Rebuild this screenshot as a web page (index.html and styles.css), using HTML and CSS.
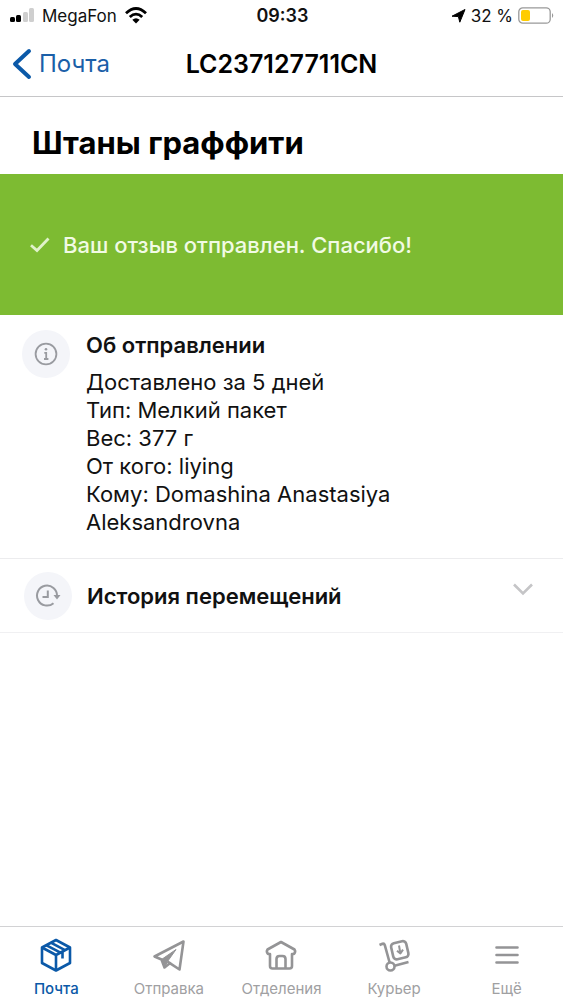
FILE: index.html
```html
<!DOCTYPE html>
<html lang="ru">
<head>
<meta charset="utf-8">
<meta name="viewport" content="width=device-width, initial-scale=1">
<title>LC237127711CN</title>
<link rel="stylesheet" href="styles.css">
</head>
<body>
<div class="app">
  <div class="status">
    <div class="status-left">
      <svg width="24" height="15" viewBox="0 0 24 15" aria-hidden="true">
        <rect x="0" y="9" width="5" height="5" rx="1.5"/>
        <rect x="6" y="7" width="5" height="7" rx="1.5"/>
        <rect x="13" y="4" width="5" height="10" rx="1.5" fill="#cfcfcf"/>
        <rect x="19" y="0" width="5" height="14" rx="1.5" fill="#cfcfcf"/>
      </svg>
      <span>MegaFon</span>
      <svg class="wifi" width="22" height="17" viewBox="0 0 22 17" fill="none" stroke="#000" stroke-width="2.8" aria-hidden="true">
        <path d="M1 6.2Q11-3.2 21 6.2"/>
        <path d="M4.8 10Q11 4.2 17.2 10"/>
        <path d="M11 16.5L7.3 12.7Q11 9.6 14.7 12.7Z" fill="#000" stroke="none"/>
      </svg>
    </div>
    <time class="clock">09:33</time>
    <div class="status-right">
      <svg class="locate" width="15" height="14" viewBox="0 0 15 14" aria-hidden="true"><path d="M14 0.5L8.8 13.2L7.4 7.6L1 7.2Z" stroke="#000" stroke-linejoin="round"/></svg>
      <span>32 %</span>
      <svg width="37" height="17" viewBox="0 0 37 17" aria-hidden="true">
        <rect x="0.8" y="0.8" width="31.4" height="15.4" rx="4" fill="#fff" stroke="#999" stroke-width="1.3"/>
        <rect x="3" y="3" width="9" height="11" rx="2" fill="#fc0"/>
        <path d="M34 6Q36.500 8.500 34 11Z" fill="#999"/>
      </svg>
    </div>
  </div>

  <header class="nav">
    <a class="back" href="#">
      <svg width="20" height="32" viewBox="0 0 20 32" fill="none" stroke="#0b59a8" stroke-width="4" stroke-linecap="round" stroke-linejoin="round" aria-hidden="true"><path d="M17 3L3 16L17 29"/></svg>
      <span>Почта</span>
    </a>
    <h1 class="track">LC237127711CN</h1>
  </header>

  <main class="content">
    <h2 class="title">Штаны граффити</h2>
    <div class="banner" role="status">
      <svg width="20" height="16" viewBox="0 0 20 16" fill="none" stroke="#e0f2ca" stroke-width="2.800" aria-hidden="true"><path d="M1 8.200L7 13.500L18.500 1.500"/></svg>
      <span>Ваш отзыв отправлен. Спасибо!</span>
    </div>
    <section class="about">
      <span class="disc">
        <svg width="24" height="24" viewBox="0 0 24 24" fill="none" stroke="#999ba0" stroke-width="1.800" aria-hidden="true">
          <circle cx="12" cy="12" r="10.400"/>
          <path d="M10.300 10.800H12.200V17M10 17H14.400"/>
          <circle cx="12" cy="7.300" r="1.300" fill="#999ba0" stroke="none"/>
        </svg>
      </span>
      <div>
        <h3 class="heading">Об отправлении</h3>
        <p class="details">Доставлено за 5 дней<br>Тип: Мелкий пакет<br>Вес: 377 г<br>От кого: liying<br>Кому: Domashina Anastasiya Aleksandrovna</p>
      </div>
    </section>
    <button class="history" type="button" aria-expanded="false">
      <span class="disc">
        <svg width="26" height="24" viewBox="0 0 26 24" fill="none" stroke="#999ba0" stroke-width="2" aria-hidden="true">
          <path d="M18.500 19.200A10 10 0 1 1 22 12"/>
          <path d="M18.500 11H25.500L22 15.500Z" fill="#999ba0" stroke="none"/>
          <path d="M12.800 6.500V13H7.500"/>
        </svg>
      </span>
      <span class="history-label">История перемещений</span>
      <svg class="chevron" width="20" height="13" viewBox="0 0 20 13" fill="none" stroke="#c5c5c7" stroke-width="2.600" aria-hidden="true"><path d="M1 1.500L10 10.500L19 1.500"/></svg>
    </button>
  </main>

  <nav class="tabs">
    <a class="tab tab-active" href="#">
      <svg width="34" height="34" viewBox="0 0 34 34" aria-hidden="true">
        <path d="M17 2L31 9.500V25L17 32.500L3 25V9.500Z"/>
        <path d="M3 9.500L17 17L31 9.500M17 17V32M12.300 4.800L26 12.200M7.500 7.300L21.500 14.700M23.500 14V20.500"/>
      </svg>
      <span>Почта</span>
    </a>
    <a class="tab" href="#">
      <svg width="34" height="34" viewBox="0 0 34 34" aria-hidden="true">
        <path d="M31.500 3.500L2.500 18.500L9.500 21.500L12.500 29.500L17.800 25.200L27.500 31.500Z"/>
        <path d="M9.500 21.500L24 11.500L15.500 23.500L12.500 29.500Z" fill="#949496" stroke-width="1"/>
        <path d="M15.500 23.500L18.500 25.500"/>
      </svg>
      <span>Отправка</span>
    </a>
    <a class="tab" href="#">
      <svg width="34" height="34" viewBox="0 0 34 34" aria-hidden="true">
        <path d="M17 4L30.500 11.500Q32 13.500 30 16H28V28Q28 30.500 25.500 30.500H8.500Q6 30.500 6 28V16H4Q2 13.500 3.500 11.500Z"/>
        <path d="M12.500 30V21Q12.500 18 15.500 18H18.500Q21.500 18 21.500 21V30"/>
      </svg>
      <span>Отделения</span>
    </a>
    <a class="tab" href="#">
      <svg width="34" height="34" viewBox="0 0 34 34" aria-hidden="true">
        <path d="M2.500 7L5.500 5.700Q7.200 5.300 7.800 7.200L12.600 24.500"/>
        <circle cx="13.500" cy="28.500" r="4"/>
        <path d="M17.500 27.800L31.500 24"/>
        <rect x="15" y="4" width="15.500" height="16.500" rx="3.500" transform="rotate(-13 22.700 12.200)"/>
        <path d="M22 7.500L23.300 15M20 12.800L23.400 15.500L26 11.600" stroke-width="2"/>
      </svg>
      <span>Курьер</span>
    </a>
    <a class="tab" href="#">
      <svg width="34" height="34" viewBox="0 0 34 34" stroke-linecap="round" aria-hidden="true"><path d="M6.500 9.500H27.500M6.500 17H27.500M6.500 24.500H27.500"/></svg>
      <span>Ещё</span>
    </a>
  </nav>
</div>
</body>
</html>
```
FILE: styles.css
```css
* { box-sizing: border-box; }
body {
  margin: 0;
  background: #fff;
  color: #111;
  font-family: Inter, "Liberation Sans", sans-serif;
}
h1, h2, h3, p { margin: 0; }
svg { display: block; flex: none; }
a { text-decoration: none; }

.app {
  min-height: 100vh;
  display: flex;
  flex-direction: column;
}

.status {
  display: grid;
  grid-template-columns: 1fr auto 1fr;
  align-items: center;
  height: 31px;
  padding: 0 8px 0 10px;
  font-size: 17px;
}
.status-left, .status-right {
  display: flex;
  align-items: center;
  gap: 7px;
}
.status-left { gap: 8px; }
.status-right { justify-content: flex-end; gap: 5px; }
.clock { font-size: 18px; font-weight: 600; }

.nav {
  display: grid;
  grid-template-columns: 1fr auto 1fr;
  align-items: center;
  height: 66px;
  padding: 0 12px;
  border-bottom: 1px solid #c6c6c8;
}
.back {
  display: flex;
  align-items: center;
  gap: 7px;
  color: #1b5fa8;
  font-size: 24px;
}
.track { font-size: 25px; font-weight: 600; color: #000; }

.content { flex: 1; }
.title {
  padding: 25px 32px 11px;
  font-size: 31px;
  line-height: 41px;
  font-weight: 700;
  color: #000;
}
.banner {
  display: flex;
  align-items: center;
  gap: 13px;
  height: 141px;
  padding: 0 30px;
  background: #7dbb32;
  color: #f1fae4;
  font-size: 22px;
  font-weight: 500;
}
.disc {
  display: grid;
  place-items: center;
  flex: none;
  width: 48px;
  height: 48px;
  border-radius: 50%;
  background: #f4f5f9;
}
.about {
  display: flex;
  gap: 16px;
  padding: 15px 100px 22px 22px;
  border-bottom: 1px solid #ececee;
}
.heading {
  font-size: 22px;
  line-height: 31px;
  font-weight: 600;
}
.details {
  padding-top: 7px;
  font-size: 22px;
  line-height: 28px;
}
.history {
  display: flex;
  align-items: center;
  gap: 15px;
  width: 100%;
  height: 74px;
  padding: 0 30px 0 24px;
  border: 0;
  border-bottom: 1px solid #f0f0f2;
  background: none;
  color: #111;
  font: 600 22px Inter, "Liberation Sans", sans-serif;
  text-align: left;
}
.history-label { flex: 1; }
.chevron { margin-bottom: 12px; }

.tabs {
  display: grid;
  grid-template-columns: repeat(5, 1fr);
  border-top: 1px solid #d2d2d4;
}
.tab {
  display: flex;
  flex-direction: column;
  align-items: center;
  gap: 7px;
  padding: 11px 0 1px;
  color: #a0a0a2;
  font-size: 15px;
  line-height: 20px;
}
.tab svg {
  fill: none;
  stroke: #949496;
  stroke-width: 2.6;
  stroke-linejoin: round;
}
.tab-active { color: #0b59a8; font-weight: 500; }
.tab-active svg { stroke: #0b59a8; }
```
